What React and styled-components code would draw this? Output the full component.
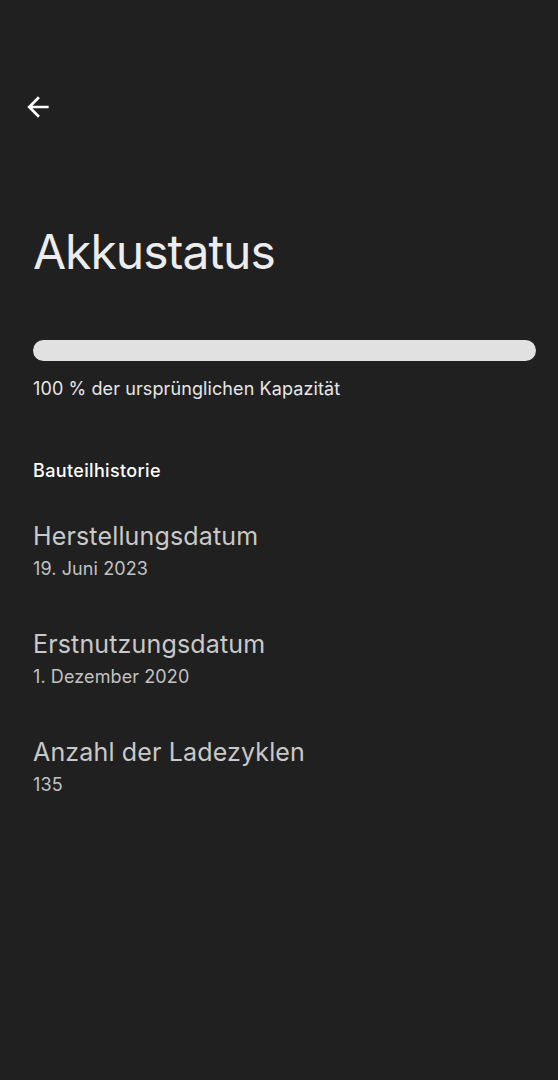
import React from "react";
import styled, { createGlobalStyle } from "styled-components";

const Global = createGlobalStyle`
  html, body { margin: 0; padding: 0; background: #202020; }
  body { font-family: Inter, Roboto, "Noto Sans", sans-serif; }
`;

const Page = styled.div`
  width: 558px;
  height: 1080px;
  background: #202020;
  display: flex;
  flex-direction: column;
  box-sizing: border-box;
  padding-top: 91px;
`;

const TopBar = styled.div`
  height: 32px;
  display: flex;
  align-items: center;
  padding-left: 22px;
`;

const BackButton = styled.button`
  width: 32px;
  height: 32px;
  padding: 0;
  border: none;
  background: none;
  display: flex;
  align-items: center;
  justify-content: center;
  color: #ffffff;
`;

const Content = styled.div`
  display: flex;
  flex-direction: column;
  padding: 0 22px 0 33px;
`;

const Title = styled.h1`
  margin: 99px 0 0;
  font-size: 48px;
  font-weight: 400;
  line-height: 60px;
  color: #ececec;
  letter-spacing: -1px;
`;

const Bar = styled.div`
  margin-top: 58px;
  height: 21px;
  border-radius: 11px;
  background: #e1e1e1;
`;

const Caption = styled.div`
  margin-top: 17px;
  font-size: 18px;
  line-height: 22px;
  color: #e6e6e6;
  letter-spacing: 0.1px;
`;

const SectionHeader = styled.div`
  margin-top: 60px;
  font-size: 18px;
  font-weight: 500;
  line-height: 22px;
  color: #ffffff;
  letter-spacing: 0.35px;
`;

const List = styled.div`
  margin-top: 37px;
  display: flex;
  flex-direction: column;
  gap: 44px;
`;

const Item = styled.div`
  display: flex;
  flex-direction: column;
`;

const ItemTitle = styled.div`
  font-size: 25px;
  line-height: 34px;
  color: #c9c9c9;
  letter-spacing: 0.15px;
`;

const ItemValue = styled.div`
  padding-top: 2px;
  font-size: 18px;
  line-height: 28px;
  color: #c2c2c2;
  letter-spacing: 0.1px;
`;

const items = [
  ["Herstellungsdatum", "19. Juni 2023"],
  ["Erstnutzungsdatum", "1. Dezember 2020"],
  ["Anzahl der Ladezyklen", "135"],
];

export default function App() {
  return (
    <>
      <Global />
      <Page>
        <TopBar>
          <BackButton aria-label="Zurück">
            <svg width="32" height="32" viewBox="0 0 24 24" fill="currentColor">
              <path d="M20 11H7.83l5.59-5.59L12 4l-8 8 8 8 1.41-1.41L7.83 13H20v-2z" />
            </svg>
          </BackButton>
        </TopBar>
        <Content>
          <Title>Akkustatus</Title>
          <Bar />
          <Caption>100 % der ursprünglichen Kapazität</Caption>
          <SectionHeader>Bauteilhistorie</SectionHeader>
          <List>
            {items.map(([t, v]) => (
              <Item key={t}>
                <ItemTitle>{t}</ItemTitle>
                <ItemValue>{v}</ItemValue>
              </Item>
            ))}
          </List>
        </Content>
      </Page>
    </>
  );
}
